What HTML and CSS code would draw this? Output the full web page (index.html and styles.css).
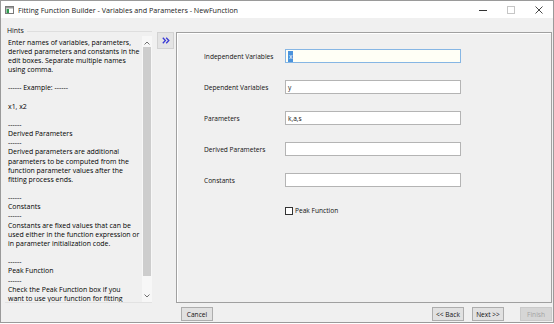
FILE: index.html
```html
<!DOCTYPE html>
<html lang="en">
<head>
    <meta charset="UTF-8">
    <title>Fitting Function Builder</title>
    <link rel="stylesheet" href="styles.css">
</head>
<body>
    <div class="window">
        <div class="titlebar">
            <svg class="app-icon" width="9" height="8" viewBox="0 0 9 8">
                <rect x="0.5" y="0.5" width="8" height="7" fill="#fff" stroke="#7a7a7a"/>
                <rect x="1" y="1" width="7" height="1.5" fill="#9a9a9a"/>
                <rect x="1.5" y="3" width="2.5" height="4" fill="#2f9a4f"/>
            </svg>
            <span class="title">Fitting Function Builder - Variables and Parameters - NewFunction</span>
            <div class="controls">
                <div class="ctl">
                    <svg width="8" height="8" viewBox="0 0 8 8"><line x1="0" y1="4.5" x2="8" y2="4.5" stroke="#333" stroke-width="1"/></svg>
                </div>
                <div class="ctl">
                    <svg width="8" height="8" viewBox="0 0 8 8"><rect x="0.5" y="0.5" width="7" height="7" fill="none" stroke="#c6c6c6"/></svg>
                </div>
                <div class="ctl">
                    <svg width="8" height="8" viewBox="0 0 8 8"><path d="M0.5 0.5 L7.5 7.5 M7.5 0.5 L0.5 7.5" stroke="#333" stroke-width="0.9"/></svg>
                </div>
            </div>
        </div> <!-- titlebar end -->

        <div class="main">
            <div class="hints">
                <div class="hints-label"><span>Hints</span><i></i></div>
                <div class="hints-box">
                    <div class="hints-text">
                        Enter names of variables, parameters,<br>
                        derived parameters and constants in the<br>
                        edit boxes. Separate multiple names<br>
                        using comma.<br>
                        <br>
                        ------ Example: ------<br>
                        <br>
                        x1, x2<br>
                        <br>
                        ------<br>
                        Derived Parameters<br>
                        ------<br>
                        Derived parameters are additional<br>
                        parameters to be computed from the<br>
                        function parameter values after the<br>
                        fitting process ends.<br>
                        <br>
                        ------<br>
                        Constants<br>
                        ------<br>
                        Constants are fixed values that can be<br>
                        used either in the function expression or<br>
                        in parameter initialization code.<br>
                        <br>
                        ------<br>
                        Peak Function<br>
                        ------<br>
                        Check the Peak Function box if you<br>
                        want to use your function for fitting<br>
                        peaks in the Peak Analyzer or in the
                    </div>
                    <div class="scrollbar">
                        <svg class="arrow" width="6" height="4" viewBox="0 0 6 4"><path d="M0.5 3.5 L3 1 L5.5 3.5" fill="none" stroke="#606060" stroke-width="0.9"/></svg>
                        <div class="thumb"></div>
                        <svg class="arrow" width="6" height="4" viewBox="0 0 6 4"><path d="M0.5 0.5 L3 3 L5.5 0.5" fill="none" stroke="#606060" stroke-width="0.9"/></svg>
                    </div>
                </div>
            </div> <!-- hints end -->

            <button type="button" class="toggle">
                <svg width="8" height="7" viewBox="0 0 8 7"><path d="M0.8 0.8 L3.4 3.5 L0.8 6.2 M4.2 0.8 L6.8 3.5 L4.2 6.2" fill="none" stroke="#3a3ad6" stroke-width="1.3"/></svg>
            </button>

            <div class="content">
                <div class="panel">
                    <div class="form">
                        <label>Independent Variables</label>
                        <div class="field focus"><span class="sel">x</span></div>
                        <label>Dependent Variables</label>
                        <div class="field">y</div>
                        <label>Parameters</label>
                        <div class="field">k,a,s</div>
                        <label>Derived Parameters</label>
                        <div class="field"></div>
                        <label>Constants</label>
                        <div class="field"></div>
                    </div>
                    <div class="check-row">
                        <span class="checkbox"></span>
                        <span>Peak Function</span>
                    </div>
                </div> <!-- panel end -->
                <div class="buttons">
                    <button type="button" class="btn">Cancel</button>
                    <span class="spacer"></span>
                    <button type="button" class="btn">&lt;&lt; Back</button>
                    <button type="button" class="btn">Next &gt;&gt;</button>
                    <button type="button" class="btn disabled">Finish</button>
                </div>
            </div>
        </div> <!-- main end -->
    </div> <!-- window end -->
</body>
</html>
```

FILE: styles.css
```css
body {
    margin: 0;
    background-color: #ffffff;
}

body * {
    font-family: 'Open Sans', 'Noto Sans', sans-serif;
    font-size: 6.6px;
    color: #111;
}

div.window {
    width: 554px;
    height: 323px;
    box-sizing: border-box;
    border: 1px solid #9a9a9a;
    background-color: #f0f0f0;
    display: flex;
    flex-direction: column;
}

/* title bar */
div.titlebar {
    height: 17px;
    background-color: #ffffff;
    display: flex;
    align-items: center;
    padding-left: 4px;
}

div.titlebar .app-icon {
    margin-right: 4px;
}

div.titlebar span.title {
    font-size: 7.2px;
    color: #222;
}

div.titlebar div.controls {
    margin-left: auto;
    display: flex;
    height: 100%;
}

div.titlebar div.ctl {
    width: 28px;
    display: flex;
    align-items: center;
    justify-content: center;
}

/* main area */
div.main {
    flex: 1;
    display: flex;
}

div.hints {
    width: 147px;
    margin-left: 4px;
    padding-top: 8px;
    display: flex;
    flex-direction: column;
}

div.hints-label {
    height: 8px;
    display: flex;
    align-items: center;
    padding-left: 2px;
}

div.hints-label span {
    font-size: 6.9px;
}

div.hints-label i {
    flex: 1;
    height: 1px;
    margin: 3px 0 0 3px;
    background-color: #dedede;
}

div.hints-box {
    height: 267px;
    margin-top: 2px;
    display: flex;
    border-bottom: 1px solid #e2e2e2;
    box-sizing: border-box;
}

div.hints-text {
    flex: 1;
    overflow: hidden;
    padding: 1.5px 0 0 3px;
    font-size: 6.95px;
    color: #000;
    line-height: 9.15px;
    white-space: nowrap;
}

div.scrollbar {
    width: 10px;
    background-color: #f7f7f7;
    display: flex;
    flex-direction: column;
    align-items: center;
    padding: 5px 0 3px 0;
    box-sizing: border-box;
}

div.scrollbar .thumb {
    width: 8px;
    height: 229px;
    margin: 2px 0 18px 0;
    background-color: #cdcdcd;
}

button.toggle {
    width: 17px;
    height: 17px;
    margin: 14px 0 0 5px;
    padding: 0;
    background-color: #e4e4e4;
    border: 1px solid #d2d2d2;
    display: flex;
    align-items: center;
    justify-content: center;
}

div.content {
    width: 376px;
    margin-left: 2px;
    display: flex;
    flex-direction: column;
}

div.panel {
    height: 271px;
    margin-top: 14px;
    box-sizing: border-box;
    border: 1px solid #a0a0a0;
    box-shadow: inset 1px 1px 0 #ffffff;
    padding: 16px 0 0 27px;
}

div.form {
    display: grid;
    grid-template-columns: 81px 176px;
    row-gap: 17px;
    align-items: center;
}

div.field {
    height: 14px;
    box-sizing: border-box;
    border: 1px solid #b4b4b4;
    background-color: #ffffff;
    padding-left: 2px;
    display: flex;
    align-items: center;
}

div.field.focus {
    border-color: #86b6e4;
    background-color: #fffff6;
}

div.field span.sel {
    background-color: #4b93dc;
    color: #ffffff;
    padding: 0 1px;
    line-height: 11px;
}

div.check-row {
    margin: 19px 0 0 81px;
    display: flex;
    align-items: center;
    gap: 2px;
}

span.checkbox {
    width: 6px;
    height: 6px;
    border: 1px solid #333;
    background-color: #ffffff;
}

div.buttons {
    display: flex;
    gap: 8px;
    margin-top: 4px;
    padding-left: 5px;
}

div.buttons span.spacer {
    flex: 1;
}

button.btn {
    width: 32px;
    height: 14px;
    padding: 0;
    background-color: #e1e1e1;
    border: 1px solid #adadad;
}

button.btn.disabled {
    margin-left: 8px;
    background-color: #d6d6d6;
    border-color: #cacaca;
    color: #a3a3a3;
}
```
